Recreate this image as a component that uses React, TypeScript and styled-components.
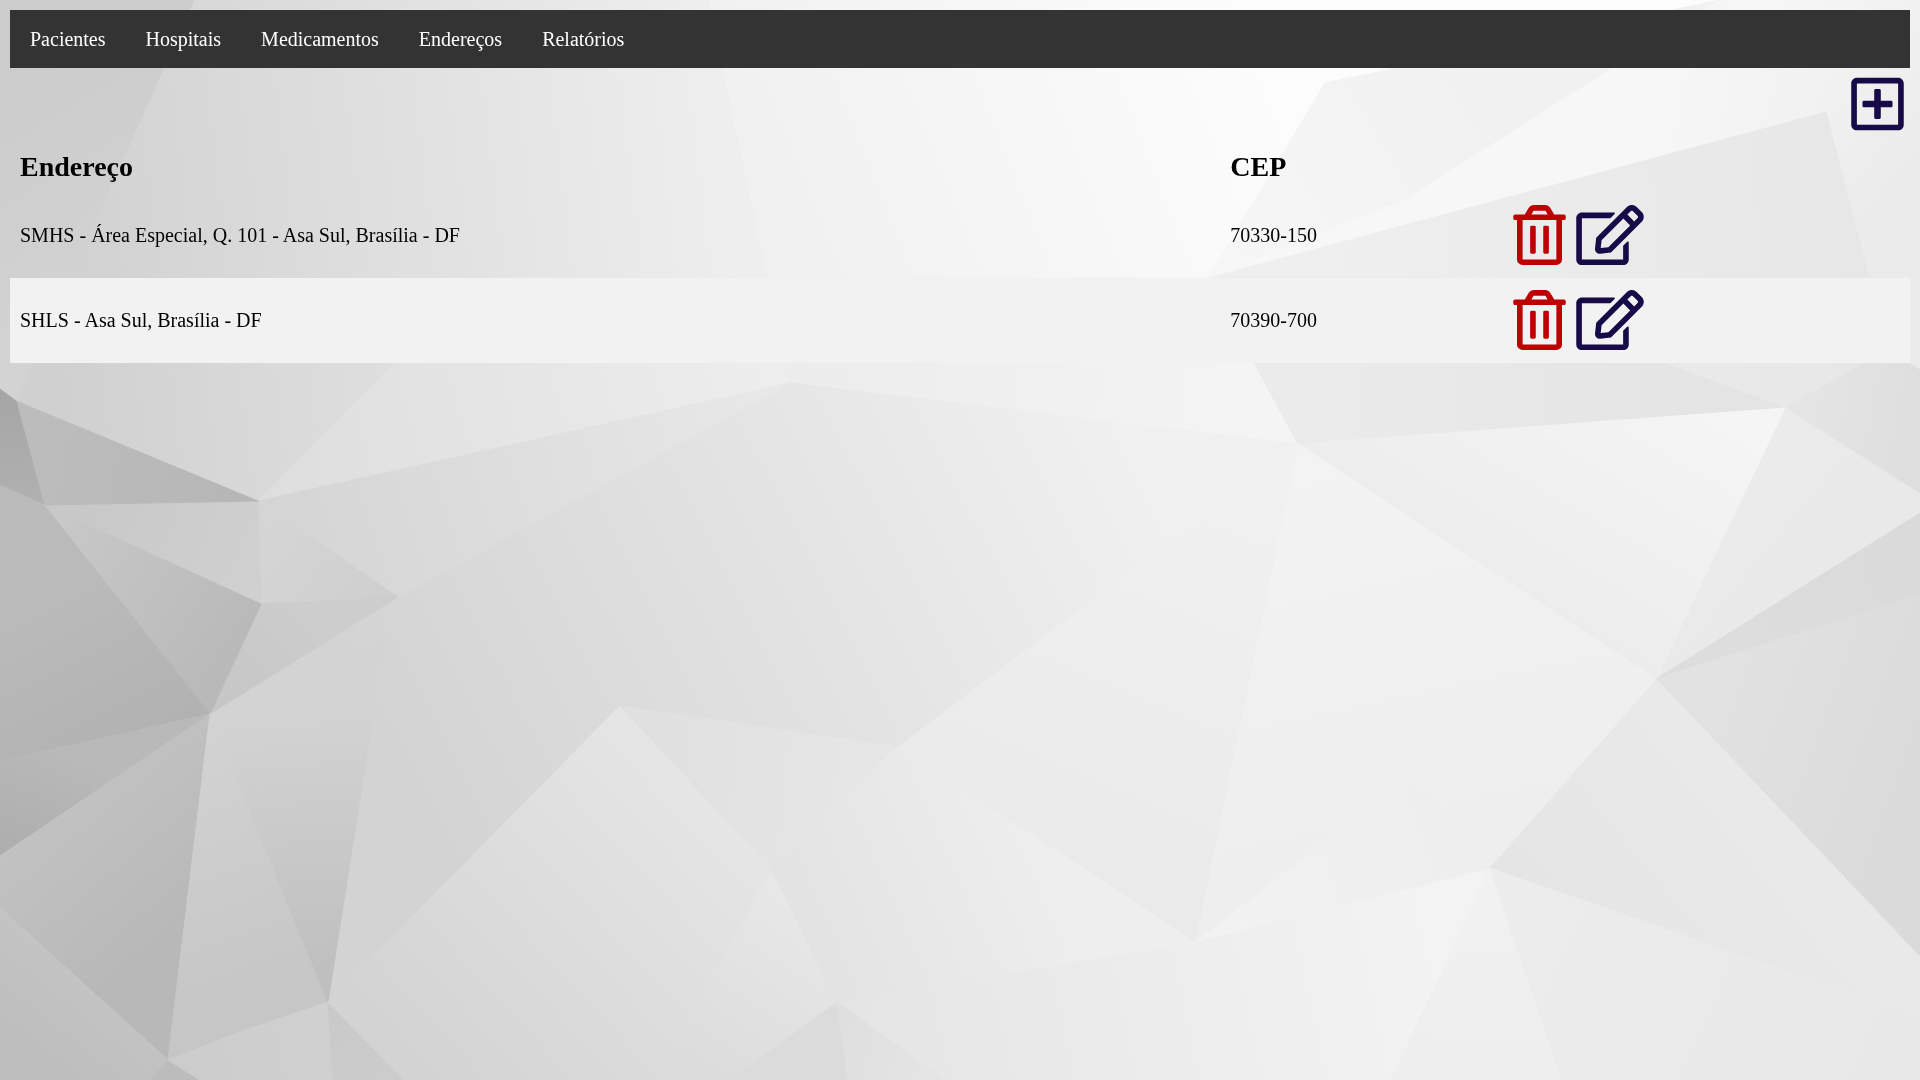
import React from "react";
import styled, { createGlobalStyle } from "styled-components";
import { FaRegEdit, FaRegPlusSquare, FaRegTrashAlt } from "react-icons/fa";

const NAVY = "#160a47";
const RED = "#bf0000";

const GlobalStyle = createGlobalStyle`
  body {
    margin: 10px;
    background: #e8e8e8;
    color: #000;
    font-family: "Liberation Serif", "Times New Roman", serif;
    font-size: 20px;
  }
`;

/* A facet of the paper-like backdrop: outline, then the two gradient stops as x, y, grey level. */
type Stop = [number, number, string];
type Facet = [string, Stop, Stop];

const facets: Facet[] = [
  ["0,0 195,0 16,401 0,389", [0, 100, "#cccccc"], [120, 300, "#d3d3d3"]],
  ["195,0 709,0 790,383 258,501 16,401", [40, 200, "#d0d0d0"], [720, 120, "#eeeeee"]],
  ["258,501 480,278 768,278 790,383", [280, 490, "#dedede"], [760, 360, "#ededed"]],
  ["709,0 1720,0 1325,83 1208,278 768,278", [720, 250, "#efefef"], [1250, 40, "#fcfcfc"]],
  ["768,278 1208,278 1298,444 790,383", [800, 380, "#ececec"], [1250, 400, "#f4f4f4"]],
  ["1325,83 1208,278 1405,200 1720,0", [1230, 250, "#f6f6f6"], [1480, 100, "#f1f1f1"]],
  ["1208,278 1826,112 1720,0 1405,200", [1650, 80, "#f7f7f7"], [1826, 112, "#f1f1f1"]],
  ["1720,0 1920,0 1920,370 1888,350 1826,112", [1750, 40, "#f6f6f6"], [1900, 180, "#ebebeb"]],
  ["1208,278 1826,112 1888,350 1785,408 1298,444", [1300, 270, "#efefef"], [1850, 250, "#e7e7e7"]],
  ["1208,278 1298,444 1785,408 1437,278", [1290, 380, "#ebebeb"], [1720, 390, "#e4e4e4"]],
  ["1785,408 1888,350 1920,370 1920,494", [1800, 400, "#e5e5e5"], [1920, 420, "#dedede"]],
  ["1785,408 1920,494 1920,513 1656,679", [1740, 450, "#ebebeb"], [1850, 540, "#e9e9e9"]],
  ["1298,444 1785,408 1656,679", [1740, 420, "#f5f5f5"], [1600, 660, "#ececec"]],
  ["1656,679 1920,513 1920,594", [1720, 640, "#dddddd"], [1920, 550, "#dadada"]],
  ["1656,679 1920,594 1920,957", [1700, 700, "#e2e2e2"], [1920, 780, "#dadada"]],
  ["1656,679 1920,957 1920,1017 1489,868", [1510, 860, "#e5e5e5"], [1680, 720, "#e9e9e9"]],
  ["1489,868 1920,1017 1920,1080 1561,1080", [1520, 880, "#ececec"], [1900, 1050, "#e8e8e8"]],
  ["1489,868 1561,1080 1390,1080", [1489, 880, "#f1f1f1"], [1480, 1060, "#eeeeee"]],
  ["1489,868 1390,1080 945,1080 837,1002 1195,942", [860, 1020, "#e5e5e5"], [1420, 900, "#f3f3f3"]],
  ["1195,942 1410,775 1489,868", [1200, 930, "#f2f2f2"], [1450, 850, "#eeeeee"]],
  ["1298,444 1656,679 1489,868 1410,775 1195,942", [1320, 470, "#f3f3f3"], [1400, 840, "#eeeeee"]],
  ["1298,444 1195,942 897,747", [1290, 480, "#f1f1f1"], [1120, 880, "#eaeaea"]],
  ["790,383 1298,444 897,747 620,706 328,1002 210,714 398,597", [400, 760, "#d3d3d3"], [1100, 400, "#f0f0f0"]],
  ["258,501 790,383 398,597", [300, 540, "#d5d5d5"], [760, 390, "#e8e8e8"]],
  ["258,501 398,597 261,604", [270, 520, "#d5d5d5"], [370, 600, "#cfcfcf"]],
  ["261,604 398,597 210,714", [320, 610, "#cdcdcd"], [240, 690, "#c7c7c7"]],
  ["44,505 258,501 261,604", [80, 510, "#c8c8c8"], [250, 590, "#d0d0d0"]],
  ["16,401 258,501 44,505", [40, 460, "#bcbcbc"], [240, 495, "#b6b6b6"]],
  ["0,389 16,401 44,505 0,485", [10, 400, "#a6a6a6"], [30, 500, "#b0b0b0"]],
  ["44,505 261,604 210,714", [60, 520, "#c8c8c8"], [240, 640, "#b9b9b9"]],
  ["0,485 44,505 210,714 0,761", [60, 600, "#bababa"], [130, 740, "#b2b2b2"]],
  ["210,714 0,761 0,856", [60, 750, "#b9b9b9"], [20, 840, "#afafaf"]],
  ["210,714 0,856 0,908 168,1060", [60, 800, "#c2c2c2"], [170, 930, "#b8b8b8"]],
  ["210,714 168,1060 240,1032 328,1002", [210, 740, "#d2d2d2"], [290, 980, "#c6c6c6"]],
  ["210,714 328,1002 385,640", [300, 710, "#d3d3d3"], [320, 970, "#bfbfbf"]],
  ["168,1060 0,908 0,1080 150,1080", [120, 970, "#c5c5c5"], [40, 1070, "#bdbdbd"]],
  ["168,1060 150,1080 200,1080", [160, 1060, "#bcbcbc"], [180, 1080, "#bcbcbc"]],
  ["168,1060 240,1032 328,1002 333,1080 200,1080", [180, 1060, "#cccccc"], [320, 1030, "#d0d0d0"]],
  ["328,1002 333,1080 405,1080", [330, 1010, "#c9c9c9"], [380, 1080, "#cccccc"]],
  ["620,706 328,1002 405,1080 655,1080 772,870", [360, 1000, "#d3d3d3"], [640, 740, "#e5e5e5"]],
  ["772,870 837,1002 730,1080 655,1080", [680, 1050, "#dcdcdc"], [780, 900, "#e7e7e7"]],
  ["837,1002 730,1080 848,1080", [800, 1010, "#dbdbdb"], [810, 1080, "#dbdbdb"]],
  ["837,1002 848,1080 945,1080", [840, 1040, "#dfdfdf"], [920, 1070, "#e4e4e4"]],
  ["620,706 897,747 772,870", [660, 730, "#e0e0e0"], [860, 750, "#e6e6e6"]],
  ["897,747 772,870 837,1002 1195,942", [800, 960, "#e2e2e2"], [1050, 850, "#eeeeee"]],
];

const Backdrop = styled.svg`
  position: fixed;
  inset: 0;
  z-index: -1;
  width: 100%;
  height: 100%;
`;

const NavList = styled.ul`
  display: flex;
  margin: 0;
  padding: 0;
  list-style: none;
  background: #333;
`;

const NavLink = styled.a`
  display: block;
  padding: 18px 20px;
  line-height: 22px;
  color: #fff;
  text-decoration: none;
`;

const Toolbar = styled.div`
  display: flex;
  justify-content: flex-end;
  padding: 6px;
`;

const IconButton = styled.button<{ $color: string; $width: number }>`
  display: block;
  padding: 0;
  border: 0;
  background: none;
  color: ${(p) => p.$color};
  cursor: pointer;

  svg {
    display: block;
    width: ${(p) => p.$width}px;
    height: 60px;
  }
`;

const Table = styled.table`
  width: 100%;
  border-collapse: collapse;
  table-layout: fixed;
`;

const Column = styled.col<{ $width?: string }>`
  width: ${(p) => p.$width ?? "auto"};
`;

const HeadCell = styled.th`
  padding: 10px;
  font-size: 28px;
  line-height: 33px;
  text-align: left;
`;

const Row = styled.tr`
  &:nth-child(even) {
    background: #f2f2f2;
  }
`;

const Cell = styled.td`
  padding: 10px;
`;

const ActionCell = styled.td`
  padding: 12px 10px 13px;
`;

const Actions = styled.div`
  display: flex;
  gap: 10px;
`;

const links = ["Pacientes", "Hospitais", "Medicamentos", "Endereços", "Relatórios"];

const addresses = [
  { address: "SMHS - Área Especial, Q. 101 - Asa Sul, Brasília - DF", cep: "70330-150" },
  { address: "SHLS - Asa Sul, Brasília - DF", cep: "70390-700" },
];

function PolygonBackdrop() {
  return (
    <Backdrop viewBox="0 0 1920 1080" preserveAspectRatio="xMidYMid slice" aria-hidden="true">
      <defs>
        {facets.map(([, a, b], i) => (
          <linearGradient key={i} id={`facet${i}`} gradientUnits="userSpaceOnUse" x1={a[0]} y1={a[1]} x2={b[0]} y2={b[1]}>
            <stop offset="0" stopColor={a[2]} />
            <stop offset="1" stopColor={b[2]} />
          </linearGradient>
        ))}
      </defs>
      {facets.map(([points], i) => (
        <polygon key={i} points={points} fill={`url(#facet${i})`} stroke={`url(#facet${i})`} strokeWidth="1" />
      ))}
    </Backdrop>
  );
}

export default function App() {
  return (
    <>
      <GlobalStyle />
      <PolygonBackdrop />
      <nav>
        <NavList>
          {links.map((label) => (
            <li key={label}>
              <NavLink href="#">{label}</NavLink>
            </li>
          ))}
        </NavList>
      </nav>
      <main>
        <Toolbar>
          <IconButton type="button" $color={NAVY} $width={53} aria-label="Adicionar endereço">
            <FaRegPlusSquare />
          </IconButton>
        </Toolbar>
        <Table>
          <colgroup>
            <Column $width="63.7%" />
            <Column $width="14.9%" />
            <Column />
          </colgroup>
          <thead>
            <tr>
              <HeadCell scope="col">Endereço</HeadCell>
              <HeadCell scope="col">CEP</HeadCell>
              <td />
            </tr>
          </thead>
          <tbody>
            {addresses.map(({ address, cep }) => (
              <Row key={cep}>
                <Cell>{address}</Cell>
                <Cell>{cep}</Cell>
                <ActionCell>
                  <Actions>
                    <IconButton type="button" $color={RED} $width={53} aria-label="Excluir">
                      <FaRegTrashAlt />
                    </IconButton>
                    <IconButton type="button" $color={NAVY} $width={68} aria-label="Editar">
                      <FaRegEdit />
                    </IconButton>
                  </Actions>
                </ActionCell>
              </Row>
            ))}
          </tbody>
        </Table>
      </main>
    </>
  );
}
